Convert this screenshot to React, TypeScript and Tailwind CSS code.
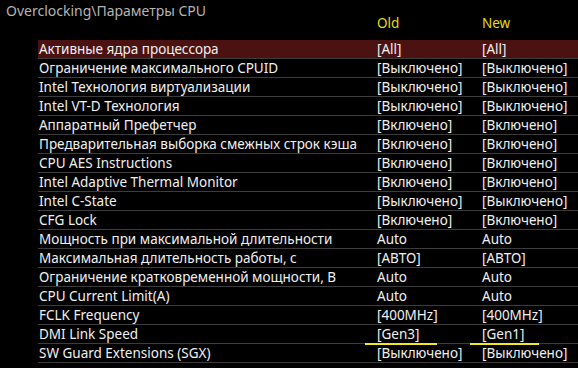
const rows: [string, string, string][] = [
  ["Активные ядра процессора", "[All]", "[All]"],
  ["Ограничение максимального CPUID", "[Выключено]", "[Выключено]"],
  ["Intel Технология виртуализации", "[Выключено]", "[Выключено]"],
  ["Intel VT-D Технология", "[Выключено]", "[Выключено]"],
  ["Аппаратный Префетчер", "[Включено]", "[Включено]"],
  ["Предварительная выборка смежных строк кэша", "[Включено]", "[Включено]"],
  ["CPU AES Instructions", "[Включено]", "[Включено]"],
  ["Intel Adaptive Thermal Monitor", "[Включено]", "[Включено]"],
  ["Intel C-State", "[Выключено]", "[Выключено]"],
  ["CFG Lock", "[Включено]", "[Включено]"],
  ["Мощность при максимальной длительности", "Auto", "Auto"],
  ["Максимальная длительность работы, с", "[АВТО]", "[АВТО]"],
  ["Ограничение кратковременной мощности, В", "Auto", "Auto"],
  ["CPU Current Limit(A)", "Auto", "Auto"],
  ["FCLK Frequency", "[400MHz]", "[400MHz]"],
  ["DMI Link Speed", "[Gen3]", "[Gen1]"],
  ["SW Guard Extensions (SGX)", "[Выключено]", "[Выключено]"],
];

export default function App() {
  return (
    <div className="w-[578px] h-[368px] bg-black overflow-hidden font-['Noto_Sans','Open_Sans',sans-serif] text-[#f0f0f0]">
      <div className="pl-[6px] pt-[2px] h-[17px] text-[14px] leading-[18px] text-[#b4b4b4] whitespace-nowrap">
        Overclocking\Параметры CPU
      </div>
      <div className="flex h-[23px] text-[13.5px] leading-[13px] text-[#e4dc10]">
        <div className="w-[377px]" />
        <div className="w-[105px]">Old</div>
        <div>New</div>
      </div>
      <div className="ml-[38px]">
        {rows.map(([label, oldVal, newVal], i) => (
          <div
            key={label}
            className={`flex h-[19px] border-b border-[#3c3c3c] text-[13.5px] leading-[18px] ${i === 0 ? "bg-[#4c1212]" : ""}`}
          >
            <div className="w-[339px] pl-[1px] whitespace-nowrap">{label}</div>
            <div className="relative w-[105px] whitespace-nowrap">
              {oldVal}
              {i === 15 && <span className="absolute left-[-12px] top-[18px] w-[72px] h-[2px] bg-[#f2e81a]" />}
            </div>
            <div className="relative whitespace-nowrap">
              {newVal}
              {i === 15 && <span className="absolute left-[-12px] top-[18px] w-[69px] h-[2px] bg-[#f2e81a]" />}
            </div>
          </div>
        ))}
      </div>
    </div>
  );
}
